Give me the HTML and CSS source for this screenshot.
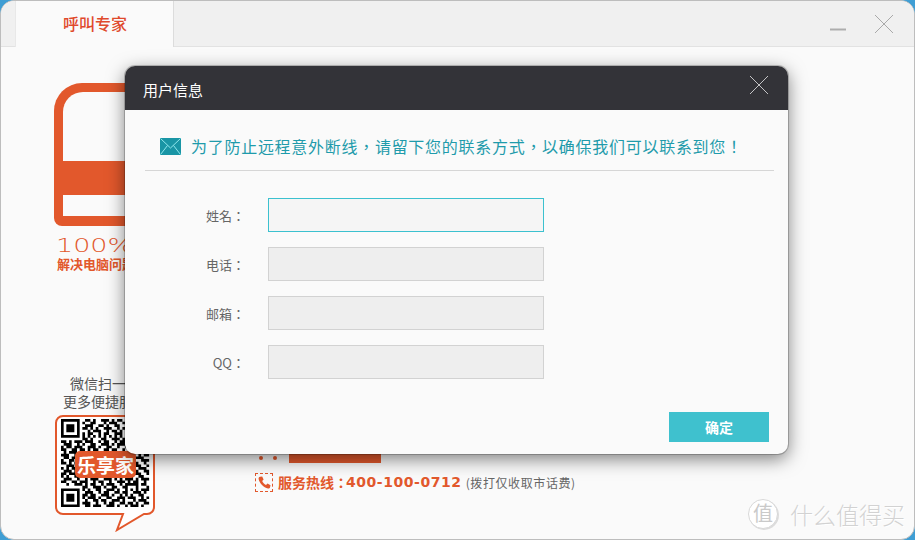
FILE: index.html
```html
<!DOCTYPE html>
<html>
    <head>
        <title>呼叫专家</title>
        <meta charset="UTF-8">
        <link rel="stylesheet" href="styles.css">
    </head>
    <body>
        <div class="window">
            <div class="tabbar">
                <div class="tab">呼叫专家</div>
                <svg class="minimize" width="16" height="3"><rect width="16" height="2" y="0.5" fill="#adadad"/></svg>
                <svg class="close" width="20" height="20"><path d="M1 1L19 19M19 1L1 19" stroke="#a9a9a9" stroke-width="1" fill="none"/></svg>
            </div>

            <div class="content">
                <div class="leftcol">
                    <div class="device">
                        <div class="screen"></div>
                        <div class="slot"></div>
                    </div>
                    <div class="percent"><span>100%</span></div>
                    <div class="slogan">解决电脑问题</div>
                    <div class="scan">微信扫一扫<br>更多便捷服务</div>
                    <div class="qrbox">
                        <svg width="102" height="118">
                            <path d="M9 2H93a7 7 0 0 1 7 7V93a7 7 0 0 1-7 7H90L63 116L69 100H9a7 7 0 0 1-7-7V9a7 7 0 0 1 7-7z" fill="#fff" stroke="#e2582c" stroke-width="2"/>
                            <g transform="translate(7 5) scale(2.67)">
                                <path fill="none" stroke="#000" d="M.5.5h6v6h-6zM26.5.5h6v6h-6zM.5 26.5h6v6h-6z"/>
                                <path fill="#000" d="M2 2h3v3h-3zM28 2h3v3h-3zM2 28h3v3h-3z"/>
                                <path fill="none" stroke="#000" stroke-width="1" d="M9 .5h2M12 .5h1M15 .5h3M19 .5h1M21 .5h2
                                M8 1.5h1M11 1.5h2M16 1.5h1M18 1.5h3M23 1.5h1
                                M9 2.5h3M14 2.5h2M17 2.5h1M20 2.5h2M24 2.5h1
                                M8 3.5h2M11 3.5h1M13 3.5h1M16 3.5h3M21 3.5h1M23 3.5h2
                                M10 4.5h1M12 4.5h3M17 4.5h1M19 4.5h2M22 4.5h1
                                M8 5.5h1M10 5.5h2M14 5.5h1M16 5.5h2M20 5.5h3M24 5.5h1
                                M8 6.5h1M10 6.5h1M12 6.5h1M14 6.5h1M16 6.5h1M18 6.5h1M20 6.5h1M22 6.5h1M24 6.5h1
                                M8 7.5h2M11 7.5h1M15 7.5h2M19 7.5h3M23 7.5h1
                                M0 8.5h2M3 8.5h1M5 8.5h2M7 8.5h1M9 8.5h3M14 8.5h1M16 8.5h2M20 8.5h1M22 8.5h2M25 8.5h1M27 8.5h2M30 8.5h1M32 8.5h1
                                M1 9.5h3M6 9.5h1M8 9.5h1M11 9.5h2M15 9.5h3M19 9.5h1M21 9.5h3M26 9.5h2M29 9.5h3
                                M0 10.5h1M2 10.5h2M5 10.5h3M10 10.5h3M14 10.5h1M17 10.5h2M21 10.5h1M24 10.5h2M28 10.5h1M31 10.5h2
                                M0 11.5h2M4 11.5h2M7 11.5h2M10 11.5h1M12 11.5h2M16 11.5h2M19 11.5h2M23 11.5h1M26 11.5h3M30 11.5h1
                                M1 12.5h1M3 12.5h3M8 12.5h3M13 12.5h1M15 12.5h1M18 12.5h3M22 12.5h2M25 12.5h1M28 12.5h2M32 12.5h1
                                M0 13.5h3M5 13.5h1M7 13.5h1M9 13.5h2M12 13.5h3M17 13.5h1M20 13.5h1M24 13.5h3M29 13.5h1M31 13.5h2
                                M1 14.5h2M4 14.5h3M9 14.5h1M11 14.5h2M14 14.5h2M18 14.5h2M21 14.5h3M26 14.5h1M28 14.5h3
                                M0 15.5h1M3 15.5h2M6 15.5h1M8 15.5h3M13 15.5h2M16 15.5h1M19 15.5h3M24 15.5h2M27 15.5h1M30 15.5h3
                                M0 16.5h2M3 16.5h1M5 16.5h3M10 16.5h1M12 16.5h1M15 16.5h3M20 16.5h1M22 16.5h2M26 16.5h3M31 16.5h1
                                M2 17.5h3M6 17.5h1M8 17.5h2M11 17.5h3M16 17.5h1M18 17.5h2M23 17.5h1M25 17.5h1M28 17.5h2M32 17.5h1
                                M0 18.5h1M2 18.5h1M4 18.5h2M7 18.5h3M12 18.5h1M14 18.5h3M19 18.5h1M21 18.5h3M26 18.5h1M29 18.5h3
                                M1 19.5h3M5 19.5h1M8 19.5h1M10 19.5h2M13 19.5h1M17 19.5h2M20 19.5h1M24 19.5h3M28 19.5h1M31 19.5h2
                                M0 20.5h2M3 20.5h3M7 20.5h1M9 20.5h2M12 20.5h3M16 20.5h1M18 20.5h1M21 20.5h2M25 20.5h1M27 20.5h3M32 20.5h1
                                M0 21.5h1M2 21.5h1M5 21.5h2M8 21.5h3M13 21.5h1M15 21.5h2M19 21.5h3M23 21.5h2M26 21.5h1M29 21.5h2
                                M1 22.5h3M6 22.5h1M9 22.5h1M11 22.5h3M16 22.5h3M20 22.5h1M22 22.5h1M24 22.5h3M28 22.5h1M30 22.5h3
                                M0 23.5h2M4 23.5h2M7 23.5h3M12 23.5h1M14 23.5h2M18 23.5h1M21 23.5h3M25 23.5h1M27 23.5h2M31 23.5h1
                                M2 24.5h1M5 24.5h3M9 24.5h1M11 24.5h2M15 24.5h1M17 24.5h3M22 24.5h1M24 24.5h5M30 24.5h2
                                M8 25.5h2M12 25.5h3M16 25.5h1M19 25.5h2M23 25.5h2M28 25.5h1M32 25.5h1
                                M8 26.5h1M10 26.5h1M13 26.5h2M17 26.5h3M21 26.5h1M24 26.5h1M26 26.5h1M28 26.5h1M30 26.5h3
                                M9 27.5h3M14 27.5h1M16 27.5h2M20 27.5h2M23 27.5h2M27 27.5h3M31 27.5h1
                                M8 28.5h2M11 28.5h2M15 28.5h3M19 28.5h1M22 28.5h1M24 28.5h1M26 28.5h1M29 28.5h2
                                M8 29.5h1M10 29.5h3M14 29.5h1M17 29.5h2M21 29.5h3M25 29.5h3M30 29.5h1M32 29.5h1
                                M9 30.5h1M12 30.5h2M15 30.5h2M19 30.5h3M23 30.5h1M27 30.5h1M29 30.5h3
                                M8 31.5h3M13 31.5h1M16 31.5h1M18 31.5h2M22 31.5h2M25 31.5h2M28 31.5h1M31 31.5h2
                                M9 32.5h2M12 32.5h3M17 32.5h3M21 32.5h1M24 32.5h1M26 32.5h3M30 32.5h1"/>
                            </g>
                        </svg>
                        <div class="qrlogo">乐享家</div>
                    </div>
                </div>

                <div class="rightcol">
                    <div class="pager">
                        <span class="dot"></span>
                        <span class="dot"></span>
                        <span class="bar"></span>
                    </div>
                    <div class="hotline">
                        <span class="phonebox">
                            <svg width="13" height="13" viewBox="0 0 13 13"><path d="M2 .8L4.2.5L5.6 3.6L4.2 5C4.9 6.6 6.200 8 8 9L9.500 7.600L12.500 9.200L12 11.400C11.700 12.200 10.800 12.600 10 12.400C5.500 11.400 1.700 7.500.6 3C.4 2 1 1 2 .8z" fill="#e2582c"/></svg>
                        </span>
                        <span class="hotlabel">服务热线：</span>
                        <span class="hotnum">400-100-0712</span>
                        <span class="hotnote">(拨打仅收取市话费)</span>
                    </div>
                </div>
            </div>

            <div class="watermark">
                <span class="wmcircle">值</span>
                <span class="wmtext">什么值得买</span>
            </div>

            <div class="dialog">
                <div class="dialog-head">
                    <span>用户信息</span>
                    <svg width="20" height="20"><path d="M1 1L19 19M19 1L1 19" stroke="#c4c4c6" stroke-width="1" fill="none"/></svg>
                </div>
                <div class="notice">
                    <svg width="21" height="17"><rect width="21" height="17" fill="#1995a5"/><path d="M.5 .5L10.500 10L20.500 .5M.5 16.500L7.500 7.500M20.500 16.500L13.500 7.500" stroke="#8fe6ec" stroke-width="1" fill="none"/></svg>
                    <span>为了防止远程意外断线，请留下您的联系方式，以确保我们可以联系到您！</span>
                </div>
                <div class="form">
                    <label>姓名：</label><input class="field active" type="text">
                    <label>电话：</label><input class="field" type="text">
                    <label>邮箱：</label><input class="field" type="text">
                    <label>QQ：</label><input class="field" type="text">
                </div>
                <div class="actions">
                    <div class="okbtn">确定</div>
                </div>
            </div>
        </div>
    </body>
</html>
```

FILE: styles.css
```css
html, body
{
    margin: 0;
    height: 100%;
    background-color: #3f9ed4;
    font-family: "Noto Sans CJK SC", "DejaVu Sans", sans-serif;
}
.window
{
    position: relative;
    box-sizing: border-box;
    width: 915px;
    height: 540px;
    display: flex;
    flex-direction: column;
    background-color: #fafafa;
    border: 1px solid #bdbdbd;
    border-radius: 14px;
    overflow: hidden;
}

/* top strip */
.tabbar
{
    height: 45px;
    flex: none;
    display: flex;
    align-items: flex-start;
    padding-left: 14px;
    background-color: #f0f0f0;
    border-bottom: 1px solid #e2e2e2;
}
.tab
{
    box-sizing: border-box;
    width: 159px;
    height: 46px;
    padding-left: 1px;
    background-color: #fafafa;
    border-left: 1px solid #e8e8e8;
    border-right: 1px solid #dcdcdc;
    color: #e0492c;
    font-size: 16px;
    font-weight: 500;
    line-height: 45px;
    text-align: center;
}
.minimize
{
    margin-left: auto;
    margin-top: 27px;
}
.close
{
    margin-left: 28px;
    margin-right: 20px;
    margin-top: 13px;
}

/* page behind the dialog */
.content
{
    flex: 1;
    display: flex;
}
.leftcol
{
    width: 102px;
    margin-left: 53px;
    padding-top: 36px;
}
.device
{
    box-sizing: border-box;
    height: 143px;
    padding: 9px 9px 10px;
    background-color: #e2582c;
    border-radius: 28px 28px 8px 8px;
}
.screen
{
    height: 69px;
    background-color: #fafafa;
    border-radius: 20px 20px 0 0;
}
.slot
{
    height: 21px;
    margin-top: 34px;
    background-color: #fafafa;
}
.percent
{
    margin-top: 9px;
    margin-left: 2px;
    color: #e2582c;
    font-family: "DejaVu Sans", sans-serif;
    font-size: 20px;
    font-weight: 300;
    line-height: 20px;
    white-space: nowrap;
}
.percent span
{
    display: inline-block;
    transform: scaleX(1.35);
    transform-origin: left center;
}
.slogan
{
    margin-left: 3px;
    color: #e2582c;
    font-size: 13px;
    font-weight: bold;
    line-height: 17px;
    white-space: nowrap;
}
.scan
{
    margin-top: 102px;
    color: #555;
    font-size: 14px;
    line-height: 18px;
    text-align: center;
    white-space: nowrap;
}
.qrbox
{
    position: relative;
    height: 118px;
    margin-top: 4px;
}
.qrlogo
{
    position: absolute;
    left: 21px;
    top: 37px;
    width: 61px;
    height: 27px;
    background-color: #e2582c;
    border-radius: 5px;
    color: #fff;
    font-size: 19px;
    font-weight: bold;
    line-height: 27px;
    text-align: center;
    white-space: nowrap;
}
.rightcol
{
    margin-left: 99px;
}
.pager
{
    display: flex;
    align-items: center;
    height: 20px;
    margin-top: 396px;
    padding-left: 4px;
}
.dot
{
    width: 4px;
    height: 4px;
    margin-right: 10px;
    margin-top: 10px;
    border-radius: 50%;
    background-color: #e2582c;
}
.bar
{
    width: 92px;
    height: 20px;
    margin-left: 2px;
    background-color: #e2582c;
}
.hotline
{
    display: flex;
    align-items: center;
    height: 20px;
    margin-top: 9px;
    white-space: nowrap;
}
.phonebox
{
    box-sizing: border-box;
    width: 18px;
    height: 19px;
    display: flex;
    align-items: center;
    justify-content: center;
    margin-right: 5px;
    border: 1px dashed #e2582c;
}
.hotlabel
{
    width: 68px;
    color: #e2582c;
    font-family: "Noto Sans CJK TC", sans-serif;
    font-size: 14px;
    font-weight: bold;
}
.hotnum
{
    color: #e2582c;
    font-family: "DejaVu Sans", sans-serif;
    font-size: 14px;
    font-weight: bold;
    letter-spacing: 0.55px;
}
.hotnote
{
    margin-left: 4px;
    color: #666;
    font-size: 12px;
    letter-spacing: 0.6px;
}

/* watermark in the corner */
.watermark
{
    position: absolute;
    right: 9px;
    bottom: 10px;
    display: flex;
    align-items: center;
    color: #d2d2d2;
}
.wmcircle
{
    box-sizing: border-box;
    width: 30px;
    height: 30px;
    border: 1px solid #d8d8d8;
    border-radius: 50%;
    background-color: #fff;
    box-shadow: 1px 1px 0 #dcdcdc;
    color: #cacaca;
    font-size: 20px;
    line-height: 26px;
    text-align: center;
}
.wmtext
{
    margin-left: 12px;
    font-size: 23px;
    line-height: 30px;
    font-weight: 300;
    text-shadow: 1px 1px 0 #fff;
}

/* dialog */
.dialog
{
    position: absolute;
    left: 124px;
    top: 65px;
    width: 663px;
    height: 388px;
    display: flex;
    flex-direction: column;
    background-color: #fafafa;
    border-radius: 10px;
    overflow: hidden;
}
.window::after
{
    content: "";
    position: absolute;
    left: 124px;
    top: 65px;
    width: 663px;
    height: 388px;
    border-radius: 10px;
    box-shadow: 0 0 0 1px rgba(0, 0, 0, 0.2), 0 5px 18px rgba(0, 0, 0, 0.5);
    pointer-events: none;
}
.dialog-head
{
    box-sizing: border-box;
    height: 44px;
    flex: none;
    display: flex;
    align-items: center;
    justify-content: space-between;
    padding: 3px 19px 0 18px;
    background-color: #333338;
    color: #fff;
    font-size: 15px;
}
.dialog-head svg
{
    margin-top: -10px;
}
.notice
{
    box-sizing: border-box;
    height: 61px;
    flex: none;
    display: flex;
    align-items: center;
    margin: 0 14px 0 20px;
    padding-left: 15px;
    padding-top: 12px;
    border-bottom: 1px solid #d6d6d6;
    color: #1f9bab;
    font-family: "Noto Sans CJK TC", sans-serif;
    font-size: 16px;
    letter-spacing: 0.72px;
    white-space: nowrap;
}
.notice svg
{
    margin-right: 10px;
}
.form
{
    display: grid;
    grid-template-columns: 120px 276px;
    column-gap: 23px;
    row-gap: 15px;
    align-items: center;
    margin-top: 27px;
}
.form label
{
    color: #666;
    font-family: "Noto Sans CJK TC", sans-serif;
    font-size: 13px;
    text-align: right;
}
.field
{
    box-sizing: border-box;
    width: 276px;
    height: 34px;
    margin: 0;
    padding: 0;
    border: 1px solid #d2d2d2;
    background-color: #eeeeee;
}
.field.active
{
    border-color: #3cc1cf;
    background-color: #f5f5f5;
}
.actions
{
    display: flex;
    justify-content: flex-end;
    margin-top: 33px;
    padding-right: 19px;
}
.okbtn
{
    width: 100px;
    height: 30px;
    background-color: #3fc1ce;
    color: #fff;
    font-size: 14px;
    font-weight: bold;
    line-height: 30px;
    text-align: center;
}
```
